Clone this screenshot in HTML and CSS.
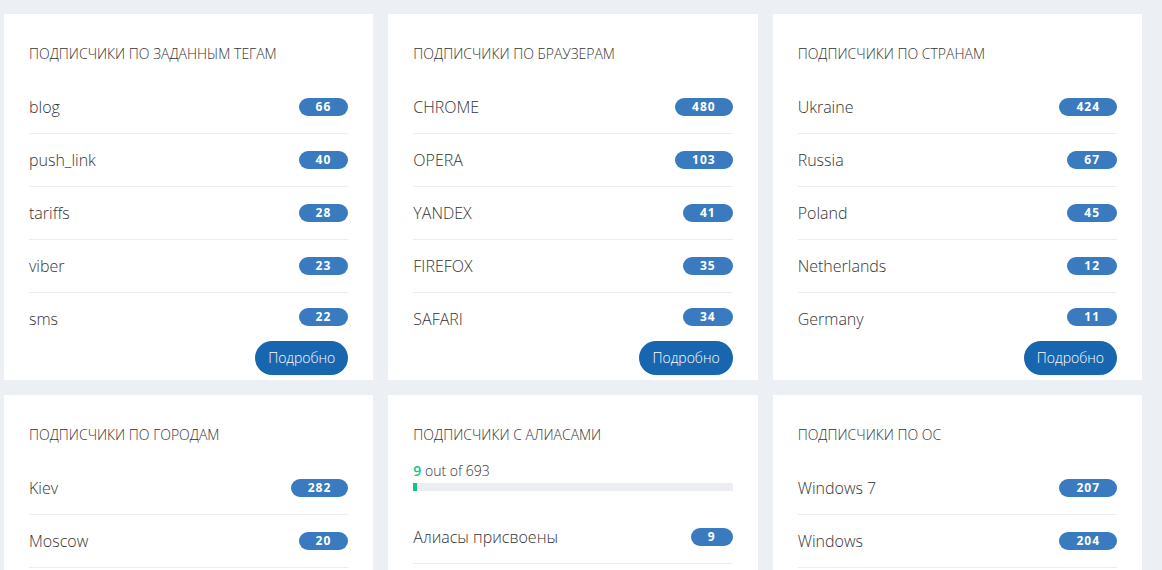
FILE: index.html
```html
<!DOCTYPE html>
<html lang="ru">
<head>
    <meta charset="UTF-8">
    <meta name="viewport" content="width=device-width, initial-scale=1.0">
    <title>Статистика подписчиков</title>
    <link rel="stylesheet" href="styles.css">
</head>
<body>

    <div class="stats-grid">

        <!-- Tags -->
        <div class="stat-card">
            <h3 class="stat-title">Подписчики по заданным тегам</h3>
            <ul class="stat-list">
                <li class="stat-item"><span>blog</span><span class="badge">66</span></li>
                <li class="stat-item"><span>push_link</span><span class="badge">40</span></li>
                <li class="stat-item"><span>tariffs</span><span class="badge">28</span></li>
                <li class="stat-item"><span>viber</span><span class="badge">23</span></li>
                <li class="stat-item"><span>sms</span><span class="badge">22</span></li>
            </ul>
            <div class="stat-footer"><a href="#" class="btn-more">Подробно</a></div>
        </div>

        <!-- Browsers -->
        <div class="stat-card">
            <h3 class="stat-title">Подписчики по браузерам</h3>
            <ul class="stat-list">
                <li class="stat-item"><span>CHROME</span><span class="badge">480</span></li>
                <li class="stat-item"><span>OPERA</span><span class="badge">103</span></li>
                <li class="stat-item"><span>YANDEX</span><span class="badge">41</span></li>
                <li class="stat-item"><span>FIREFOX</span><span class="badge">35</span></li>
                <li class="stat-item"><span>SAFARI</span><span class="badge">34</span></li>
            </ul>
            <div class="stat-footer"><a href="#" class="btn-more">Подробно</a></div>
        </div>

        <!-- Countries -->
        <div class="stat-card">
            <h3 class="stat-title">Подписчики по странам</h3>
            <ul class="stat-list">
                <li class="stat-item"><span>Ukraine</span><span class="badge">424</span></li>
                <li class="stat-item"><span>Russia</span><span class="badge">67</span></li>
                <li class="stat-item"><span>Poland</span><span class="badge">45</span></li>
                <li class="stat-item"><span>Netherlands</span><span class="badge">12</span></li>
                <li class="stat-item"><span>Germany</span><span class="badge">11</span></li>
            </ul>
            <div class="stat-footer"><a href="#" class="btn-more">Подробно</a></div>
        </div>

        <!-- Cities -->
        <div class="stat-card">
            <h3 class="stat-title">Подписчики по городам</h3>
            <ul class="stat-list">
                <li class="stat-item"><span>Kiev</span><span class="badge">282</span></li>
                <li class="stat-item"><span>Moscow</span><span class="badge">20</span></li>
                <li class="stat-item"><span>Kharkiv</span><span class="badge">14</span></li>
                <li class="stat-item"><span>Odessa</span><span class="badge">9</span></li>
                <li class="stat-item"><span>Lviv</span><span class="badge">7</span></li>
            </ul>
            <div class="stat-footer"><a href="#" class="btn-more">Подробно</a></div>
        </div>

        <!-- Aliases -->
        <div class="stat-card">
            <h3 class="stat-title">Подписчики с алиасами</h3>
            <div class="progress-label"><span class="progress-value">9</span> out of 693</div>
            <div class="progress">
                <div class="progress-fill" style="width: 1.3%"></div>
            </div>
            <ul class="stat-list">
                <li class="stat-item"><span>Алиасы присвоены</span><span class="badge">9</span></li>
                <li class="stat-item"><span>Без алиасов</span><span class="badge">684</span></li>
            </ul>
        </div>

        <!-- OS -->
        <div class="stat-card">
            <h3 class="stat-title">Подписчики по ОС</h3>
            <ul class="stat-list">
                <li class="stat-item"><span>Windows 7</span><span class="badge">207</span></li>
                <li class="stat-item"><span>Windows</span><span class="badge">204</span></li>
                <li class="stat-item"><span>Android</span><span class="badge">118</span></li>
                <li class="stat-item"><span>Mac OS</span><span class="badge">95</span></li>
                <li class="stat-item"><span>Linux</span><span class="badge">40</span></li>
            </ul>
            <div class="stat-footer"><a href="#" class="btn-more">Подробно</a></div>
        </div>

    </div>

</body>
</html>
```

FILE: styles.css
```css
/* Basic Reset */
* {
    margin: 0;
    padding: 0;
    box-sizing: border-box;
}

body {
    font-family: 'Open Sans', sans-serif;
    color: #333;
    background: #eceff4;
}

/* Cards grid */
.stats-grid {
    display: grid;
    grid-template-columns: repeat(3, 1fr);
    gap: 15px;
    width: 1142px;
    padding: 14px 0 14px 4px;
}

.stat-card {
    background: #fff;
    padding: 31px 25px 5px 25px;
}

.stat-title {
    font-size: 14px;
    font-weight: 300;
    line-height: 18px;
    text-transform: uppercase;
    color: #333;
    margin-bottom: 18px;
}

/* Rows */
.stat-list {
    list-style: none;
}

.stat-item {
    display: flex;
    justify-content: space-between;
    align-items: center;
    height: 53px;
    border-bottom: 1px solid #ebedf0;
    font-size: 16px;
    font-weight: 300;
    padding-bottom: 1px;
}

    .stat-item:last-child {
        border-bottom: none;
        height: 48px;
        padding-bottom: 0;
        align-items: flex-start;
        padding-top: 15px;
    }

.badge {
    display: inline-block;
    min-width: 42px;
    height: 18px;
    line-height: 18px;
    padding: 0 17px;
    border-radius: 9px;
    background: #3a7bbf;
    color: #fff;
    font-size: 12px;
    font-weight: 700;
    letter-spacing: 1px;
    text-align: center;
}

/* Footer button */
.stat-footer {
    display: flex;
    justify-content: flex-end;
}

.btn-more {
    display: inline-block;
    height: 34px;
    line-height: 34px;
    padding: 0 13px;
    border-radius: 17px;
    background: #1866b0;
    color: #fff;
    font-size: 14px;
    font-weight: 300;
    text-decoration: none;
}

/* Alias progress */
.progress-label {
    font-size: 14px;
    font-weight: 300;
    line-height: 18px;
}

.progress-value {
    color: #19bf8c;
    font-weight: 600;
}

.progress {
    height: 8px;
    margin: 3px 0 20px;
    background: #ebedf0;
}

.progress-fill {
    height: 100%;
    background: #19bf8c;
}
```
